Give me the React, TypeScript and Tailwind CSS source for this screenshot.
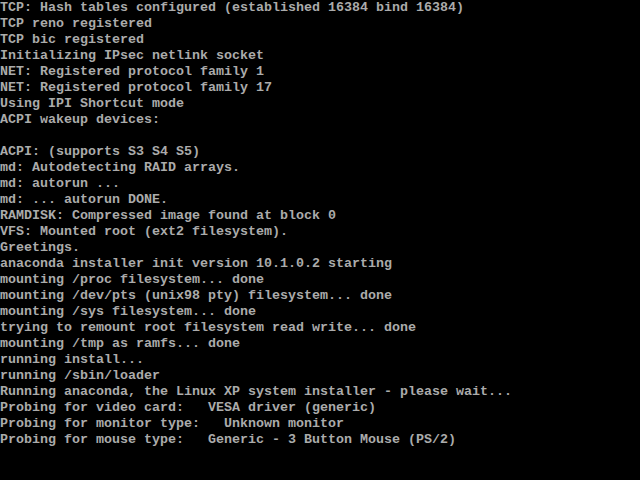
const lines = [
  "TCP: Hash tables configured (established 16384 bind 16384)",
  "TCP reno registered",
  "TCP bic registered",
  "Initializing IPsec netlink socket",
  "NET: Registered protocol family 1",
  "NET: Registered protocol family 17",
  "Using IPI Shortcut mode",
  "ACPI wakeup devices:",
  "",
  "ACPI: (supports S3 S4 S5)",
  "md: Autodetecting RAID arrays.",
  "md: autorun ...",
  "md: ... autorun DONE.",
  "RAMDISK: Compressed image found at block 0",
  "VFS: Mounted root (ext2 filesystem).",
  "Greetings.",
  "anaconda installer init version 10.1.0.2 starting",
  "mounting /proc filesystem... done",
  "mounting /dev/pts (unix98 pty) filesystem... done",
  "mounting /sys filesystem... done",
  "trying to remount root filesystem read write... done",
  "mounting /tmp as ramfs... done",
  "running install...",
  "running /sbin/loader",
  "Running anaconda, the Linux XP system installer - please wait...",
  "Probing for video card:   VESA driver (generic)",
  "Probing for monitor type:   Unknown monitor",
  "Probing for mouse type:   Generic - 3 Button Mouse (PS/2)",
];

export default function App() {
  return (
    <div className="w-[640px] h-[480px] bg-black overflow-hidden">
      <div className="flex flex-col font-['Liberation_Mono',monospace] font-bold text-[13.333px] leading-[16px] text-[#ababab] whitespace-pre">
        {lines.map((l, i) => (
          <div key={i} className="h-[16px]">
            {l}
          </div>
        ))}
      </div>
    </div>
  );
}
